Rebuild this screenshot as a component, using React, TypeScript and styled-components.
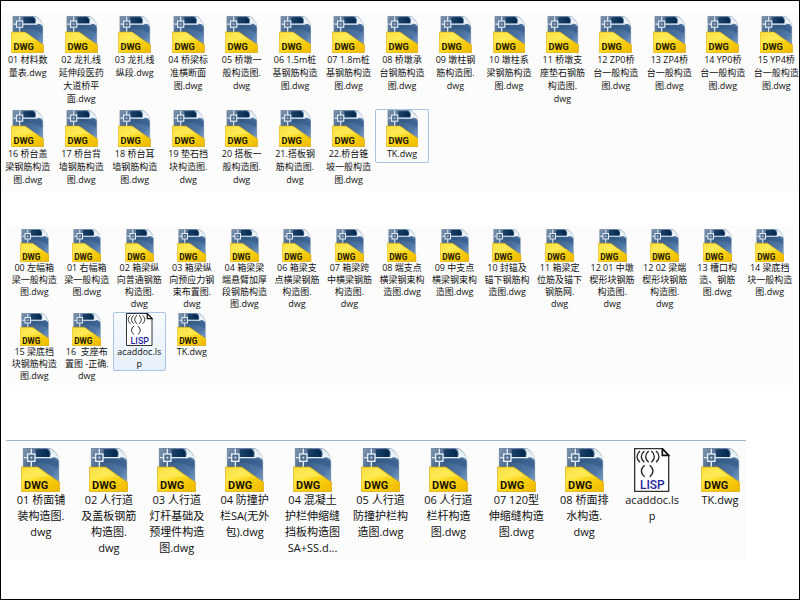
import React, { useState } from "react";
import styled, { createGlobalStyle, css } from "styled-components";

const GlobalStyle = createGlobalStyle`
  *, *::before, *::after { box-sizing: border-box; }
  body { margin: 0; background: #fff; }
`;

type Size = "small" | "medium" | "large";

const metrics = {
  small: { icon: 33, font: 9, line: 12, bottom: 0, rowGap: 1, bleed: 3 },
  medium: { icon: 37, font: 9, line: 13, bottom: 2, rowGap: 1, bleed: 4 },
  large: { icon: 44, font: 11, line: 16, bottom: 1, rowGap: 1, bleed: 8 },
};

const Page = styled.main`
  min-height: 100vh;
  padding-top: 11px;
  border: 1px solid #000;
  background: #fff;
  overflow: hidden;
  color: #111;
  font-family: "Open Sans", "Noto Sans CJK SC", sans-serif;
`;

const Panel = styled.section<{ $size: Size }>`
  background: #fcfcfc;
  ${({ $size }) =>
    $size === "medium" &&
    css`
      padding: 3px 0 2px;
      margin-bottom: 35px;
      overflow: hidden;
    `}
  ${({ $size }) =>
    $size === "small" &&
    css`
      padding: 2px 0 2px 2px;
      margin: 0 6px 55px 5px;
    `}
  ${({ $size }) =>
    $size === "large" &&
    css`
      padding: 6px 0 2px 1px;
      margin: 0 53px 0 5px;
      border-top: 1px solid #a3b3cf;
    `}
`;

const FileGrid = styled.ul<{ $columns: number; $size: Size }>`
  display: grid;
  grid-template-columns: repeat(${({ $columns }) => $columns}, minmax(0, 1fr));
  row-gap: ${({ $size }) => metrics[$size].rowGap}px;
  margin: 0 -${({ $size }) => metrics[$size].bleed}px 0 0;
  padding: 0;
  list-style: none;
`;

const FileButton = styled.button<{ $size: Size; $look?: "focused" | "selected" }>`
  display: flex;
  flex-direction: column;
  align-items: center;
  width: 100%;
  padding: 0 0 ${({ $size }) => metrics[$size].bottom}px;
  border: 1px solid transparent;
  border-radius: 2px;
  background: none;
  color: inherit;
  font: inherit;
  font-size: ${({ $size }) => metrics[$size].font}px;
  line-height: ${({ $size }) => metrics[$size].line}px;
  text-align: center;
  ${({ $look }) =>
    $look &&
    css`
      border-color: #a9c4e2;
    `}
  ${({ $look }) =>
    $look === "selected" &&
    css`
      background: linear-gradient(#f7fafe, #e6f0fb);
    `}

  svg {
    display: block;
    height: ${({ $size }) => metrics[$size].icon}px;
    width: auto;
  }
`;

const FileName = styled.span`
  white-space: pre;
`;

const Definitions = styled.svg`
  display: block;
  width: 0;
  height: 0;
`;

function IconDefs() {
  return (
    <Definitions aria-hidden="true">
      <defs>
        <linearGradient id="sheet" x1="0" y1="0" x2="1" y2="1">
          <stop offset="0" stopColor="#8398b0" />
          <stop offset="0.35" stopColor="#3d618a" />
          <stop offset="0.7" stopColor="#5078a8" />
          <stop offset="1" stopColor="#93b5d8" />
        </linearGradient>
        <linearGradient id="shade" x1="0" y1="0" x2="1" y2="0">
          <stop offset="0" stopColor="#1c4269" />
          <stop offset="1" stopColor="#02274c" />
        </linearGradient>
        <linearGradient id="curl" x1="0" y1="1" x2="1" y2="0">
          <stop offset="0" stopColor="#5c7c9f" />
          <stop offset="0.4" stopColor="#f6f9fc" />
          <stop offset="0.7" stopColor="#dce6ef" />
          <stop offset="1" stopColor="#6f8fb0" />
        </linearGradient>
        <linearGradient id="label" x1="0" y1="0" x2="1" y2="1">
          <stop offset="0" stopColor="#f5d21a" />
          <stop offset="0.35" stopColor="#ffe640" />
          <stop offset="0.6" stopColor="#f9d010" />
          <stop offset="1" stopColor="#eeb800" />
        </linearGradient>
      </defs>
    </Definitions>
  );
}

function DwgIcon() {
  return (
    <svg viewBox="0 0 117 132" aria-hidden="true">
      <path d="M7 1H84C98 4 110 18 113 36V128H7Z" fill="url(#sheet)" stroke="#5b7594" strokeWidth="2" />
      <path d="M44 4H76C86 8 88 18 84 27H44Z" fill="url(#shade)" />
      <path d="M34 32H90L112 40V62C90 48 62 42 34 44Z" fill="#2b5280" opacity="0.45" />
      <path d="M78 1C93 8 89 22 86 31C96 25 109 28 114 39C114 22 100 2 78 1Z" fill="url(#curl)" />
      <g fill="none" stroke="#e6edf4" strokeWidth="4">
        <path d="M9 29H20M42 29H94M31 2V18M31 40V58" />
        <rect x="20" y="18" width="22" height="22" fill="#4c6b8e" />
        <path d="M27 29H35M31 25V33" strokeWidth="2" />
      </g>
      <path d="M1 57H50C64 66 88 84 116 103V131H1Z" fill="url(#label)" stroke="#d8a30c" strokeWidth="2" />
      <path d="M3 59H49C62 68 78 80 96 91C62 82 30 84 3 100Z" fill="#fff27a" opacity="0.4" />
      <text x="9" y="122" fontFamily="'Liberation Sans Narrow', Roboto, sans-serif" fontWeight="700" fontSize="33" fill="#1c1600">
        DWG
      </text>
    </svg>
  );
}

function LispIcon() {
  return (
    <svg viewBox="0 0 107 132" aria-hidden="true">
      <path d="M2 2H85L104 22V130H2Z" fill="#fff" stroke="#333" strokeWidth="4" />
      <path d="M85 2V22H104Z" fill="#fff" stroke="#111" strokeWidth="5" />
      <g fill="none" stroke="#222" strokeWidth="4">
        <path d="M18 9C6 19 6 33 18 43M31 9C19 19 19 33 31 43M44 9C32 19 32 33 44 43" />
        <path d="M52 9C64 19 64 33 52 43M66 9C78 19 78 33 66 43" />
        <path d="M32 52C19 62 19 76 32 86M47 52C60 62 60 76 47 86" />
      </g>
      <text x="18" y="122" fontFamily="Roboto, sans-serif" fontWeight="500" fontSize="36" fill="#24249c">
        LISP
      </text>
    </svg>
  );
}

const substructure = [
  "01 材料数\n量表.dwg",
  "02 龙扎线\n延伸段医药\n大道桥平\n面.dwg",
  "03 龙扎线\n纵段.dwg",
  "04 桥梁标\n准横断面\n图.dwg",
  "05 桥墩一\n般构造图.\ndwg",
  "06 1.5m桩\n基钢筋构造\n图.dwg",
  "07 1.8m桩\n基钢筋构造\n图.dwg",
  "08 桥墩承\n台钢筋构造\n图.dwg",
  "09 墩柱钢\n筋构造图.\ndwg",
  "10 墩柱系\n梁钢筋构造\n图.dwg",
  "11 桥墩支\n座垫石钢筋\n构造图.\ndwg",
  "12 ZP0桥\n台一般构造\n图.dwg",
  "13 ZP4桥\n台一般构造\n图.dwg",
  "14 YP0桥\n台一般构造\n图.dwg",
  "15 YP4桥\n台一般构造\n图.dwg",
  "16 桥台盖\n梁钢筋构造\n图.dwg",
  "17 桥台背\n墙钢筋构造\n图.dwg",
  "18 桥台耳\n墙钢筋构造\n图.dwg",
  "19 垫石挡\n块构造图.\ndwg",
  "20 搭板一\n般构造图.\ndwg",
  "21.搭板钢\n筋构造图.\ndwg",
  "22.桥台锥\n坡一般构造\n图.dwg",
  "TK.dwg",
];

const girders = [
  "00 左幅箱\n梁一般构造\n图.dwg",
  "01 右幅箱\n梁一般构造\n图.dwg",
  "02 箱梁纵\n向普通钢筋\n构造图.\ndwg",
  "03 箱梁纵\n向预应力钢\n束布置图.\ndwg",
  "04 箱梁梁\n端悬臂加厚\n段钢筋构造\n图.dwg",
  "06 箱梁支\n点横梁钢筋\n构造图.\ndwg",
  "07 箱梁跨\n中横梁钢筋\n构造图.\ndwg",
  "08 端支点\n横梁钢束构\n造图.dwg",
  "09 中支点\n横梁钢束构\n造图.dwg",
  "10 封锚及\n锚下钢筋构\n造图.dwg",
  "11 箱梁定\n位筋及锚下\n钢筋网.\ndwg",
  "12 01 中墩\n楔形块钢筋\n构造图.\ndwg",
  "12 02 梁端\n楔形块钢筋\n构造图.\ndwg",
  "13 槽口构\n造、钢筋\n图.dwg",
  "14 梁底挡\n块一般构造\n图.dwg",
  "15 梁底挡\n块钢筋构造\n图.dwg",
  "16  支座布\n置图 -正确.\ndwg",
  "acaddoc.ls\np",
  "TK.dwg",
];

const deck = [
  "01 桥面铺\n装构造图.\ndwg",
  "02 人行道\n及盖板钢筋\n构造图.\ndwg",
  "03 人行道\n灯杆基础及\n预埋件构造\n图.dwg",
  "04 防撞护\n栏SA(无外\n包).dwg",
  "04 混凝土\n护栏伸缩缝\n挡板构造图\nSA+SS.d...",
  "05 人行道\n防撞护栏构\n造图.dwg",
  "06 人行道\n栏杆构造\n图.dwg",
  "07 120型\n伸缩缝构造\n图.dwg",
  "08 桥面排\n水构造.\ndwg",
  "acaddoc.ls\np",
  "TK.dwg",
];

interface FolderProps {
  label: string;
  files: string[];
  columns: number;
  size: Size;
  initial?: number;
  look?: "focused" | "selected";
}

function Folder({ label, files, columns, size, initial, look = "selected" }: FolderProps) {
  const [current, setCurrent] = useState(initial);
  return (
    <Panel $size={size} aria-label={label}>
      <FileGrid $columns={columns} $size={size}>
        {files.map((name, index) => (
          <li key={name}>
            <FileButton
              type="button"
              $size={size}
              $look={index === current ? look : undefined}
              aria-pressed={index === current}
              onClick={() => setCurrent(index)}
            >
              {name.startsWith("acaddoc") ? <LispIcon /> : <DwgIcon />}
              <FileName>{name}</FileName>
            </FileButton>
          </li>
        ))}
      </FileGrid>
    </Panel>
  );
}

export default function App() {
  return (
    <>
      <GlobalStyle />
      <Page lang="zh-CN">
        <IconDefs />
        <Folder label="下部结构" files={substructure} columns={15} size="medium" initial={22} look="focused" />
        <Folder label="箱梁" files={girders} columns={15} size="small" initial={17} />
        <Folder label="桥面" files={deck} columns={11} size="large" />
      </Page>
    </>
  );
}
